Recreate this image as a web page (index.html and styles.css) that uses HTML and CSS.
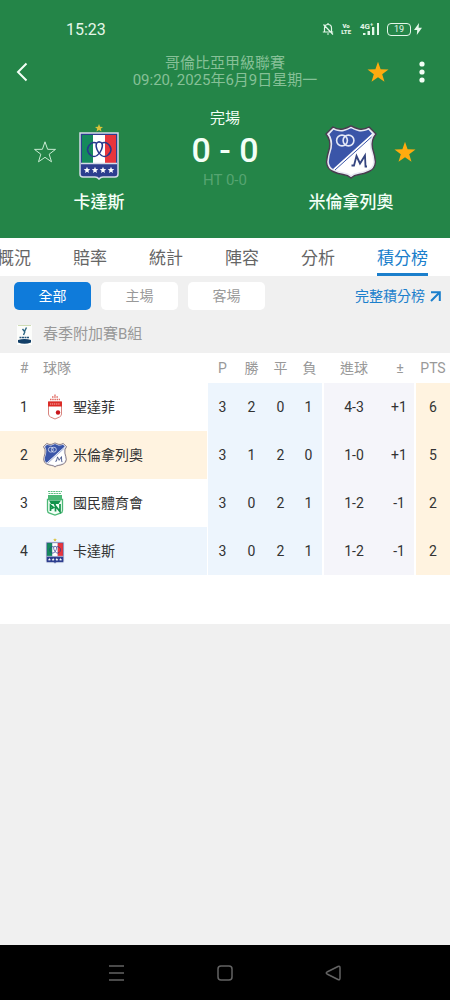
FILE: index.html
```
<!DOCTYPE html>
<html lang="zh-Hant">
<head>
    <meta charset="UTF-8">
    <meta name="viewport" content="width=device-width, initial-scale=1.0">
    <title>卡達斯 0 - 0 米倫拿列奧</title>
    <link rel="stylesheet" href="styles.css">
</head>
<body>
    <!-- shared crests and icons -->
    <svg class="defs" width="0" height="0" aria-hidden="true">
        <symbol id="star" viewBox="0 0 24 24">
            <path d="M12 1.8l2.6 7.5 7.9.1-6.3 4.8 2.3 7.6-6.5-4.5-6.5 4.5 2.3-7.6L1.5 9.4l7.9-.1z"/>
        </symbol>
        <symbol id="cadiz" viewBox="0 0 40 56">
            <path d="M20 0l1.1 2.7 2.9.2-2.2 1.9.7 2.8L20 6.1l-2.5 1.5.7-2.8L16 2.9l2.900-.2z" fill="#d9c23a"/>
            <path d="M1 9h38v41q0 3-3 3H24q-2.5 0-4 2-1.5-2-4-2H4q-3 0-3-3z" fill="#2d3e8f" stroke="#d5dbe8" stroke-width="1.5"/>
            <path d="M3 11h11v28H3z" fill="#158a5c"/>
            <path d="M14 11h12v28H14z" fill="#fff"/>
            <path d="M26 11h11v28H26z" fill="#e8353c"/>
            <path d="M2 39.5h36" stroke="#d5dbe8" stroke-width="1.5"/>
            <g fill="none" stroke="#26398c" stroke-width="1.5">
                <path d="M18 19.5q-3-2-6 0-3.500 2.500-3.500 6t3.500 6q3 2 6 0 3-2 4.500-6t.5-6q-1-2-3.500-1.500"/>
                <path d="M22.500 19.5q3-2 6 0 3.500 2.500 3.500 6t-3.500 6q-3 2-6 0-3-2-4.500-6t-.5-6q1-2 3-1.500"/>
            </g>
            <g fill="#fff">
                <path id="s" d="M8 42.800l.9 2.300 2.400.1-1.900 1.500.6 2.300L8 47.700l-2 1.300.6-2.300-1.900-1.500 2.400-.1z"/>
                <use href="#s" x="8"/>
                <use href="#s" x="16"/>
                <use href="#s" x="24"/>
            </g>
        </symbol>
        <symbol id="millonarios" viewBox="0 0 52 54">
            <path d="M8 2Q13 5 18 4 22 3 26 .8 30 3 34 4 39 5 44 2L51 9Q46 15 47.5 23 50 31 50.5 37 50 44 44 46.5 39 49 34 49.5 29 50 26 53 23 50 18 49.5 13 49 8 46.5 2 44 1.5 37 2 31 4.5 23 6 15 1 9z" fill="#e6e8f2" stroke="#4a3c50" stroke-width="1.4"/>
            <path d="M8.5 4.8Q14 7 18.5 6.2 22 5.4 26 3.2 30 5.4 33.5 6.2 38 7 43.5 4.8L47.6 9.2Q43.8 15 45.2 23 48 31 48.2 37 47.6 42.5 43 44.5 38 46.8 33.5 47.2 29 47.6 26 50 23 47.6 18.5 47.2 14 46.8 9 44.5 4.4 42.5 3.8 37 4 31 6.8 23 8.2 15 4.4 9.2z" fill="#fff"/>
            <path d="M8.5 4.8Q14 7 18.5 6.2 22 5.4 26 3.2 30 5.4 33.5 6.2 38 7 43.5 4.8L47 8.7 8 44Q4.4 42 3.8 37 4 31 6.800 23 8.2 15 4.4 9.2z" fill="#3a55a8"/>
            <path d="M46.500 12L10 45" stroke="#3a55a8" stroke-width="1"/>
            <g fill="none" stroke="#e3e8f6" stroke-width="1.6">
                <circle cx="17" cy="15.500" r="5.400"/>
                <circle cx="23.500" cy="15.500" r="5.400"/>
            </g>
            <path d="M26.500 40.500h2.500l2.500-9.500 3.500 7.500 5-8 .5 11h1.500" fill="none" stroke="#35457f" stroke-width="1.8"/>
        </symbol>
        <symbol id="santafe" viewBox="0 0 16 26">
            <path d="M3 5.5h10M5 3h6M8 .5v2" stroke="#e06a62" stroke-width="1.3" stroke-dasharray="1.5 .7"/>
            <path d="M1.5 8v12q0 2 2 3L8 25l4.5-2q2-1 2-3V8z" fill="#fff" stroke="#d8847e"/>
            <path d="M1 7.5h14v5H1z" fill="#dc2b27"/>
            <path d="M3 10h10" stroke="#f4b9b4" stroke-dasharray="1.2 .7"/>
            <circle cx="11" cy="18.5" r="2.2" fill="#c9151b"/>
        </symbol>
        <symbol id="nacional" viewBox="0 0 18 26">
            <path d="M2 1.5h14M2.5 3.5h13" stroke="#5fbf82" stroke-dasharray="2 .6"/>
            <path d="M2 5h14v4H2z" fill="#4cb876"/>
            <path d="M1.5 9.5h15v11q0 2-2 2.6L9 25l-5.5-1.9q-2-.6-2-2.6z" fill="#f2fff6" stroke="#4cb876" stroke-width="1.3"/>
            <path d="M3 10.5h12L12.5 14H10l-1 2.5L7.5 14H5z" fill="#12924a"/>
            <path d="M4.5 21v-6l3 2.5-3 1.5M9.5 21.5V16l4.5 5.5V14" fill="none" stroke="#12924a" stroke-width="1.7"/>
        </symbol>
    </svg>

    <header class="top">
        <div class="status-bar">
            <span class="clock">15:23</span>
            <div class="status-icons">
                <svg width="12" height="14" viewBox="0 0 12 14" fill="none" stroke="#e4f7e9" stroke-width="1.2">
                    <path d="M2.5 9.5V6a3.5 3.5 0 0 1 7 0v3.5M.8 10h10.4M5 12h2M6 2.5V1M1.5 2.5l9.5 10"/>
                </svg>
                <span class="volte">Vo<br>LTE</span>
                <svg class="signal" width="21" height="14" viewBox="0 0 21 14" fill="#e4f7e9">
                    <path d="M4 11h2.5v2H4zM8.5 9h2.5v4H8.5zM13 5h2.3v8H13zM18 1h2v12h-2z"/>
                    <text x="1" y="6.5">4G⁺</text>
                </svg>
                <span class="battery">19</span>
                <svg class="bolt" width="8" height="12" viewBox="0 0 8 12" fill="#e4f7e9">
                    <path d="M5 0L0 7h3.200L2.800 12 8 4.800H4.600z"/>
                </svg>
            </div>
        </div>

        <div class="app-bar">
            <div class="app-left">
                <button class="icon-btn" aria-label="返回">
                    <svg width="12" height="20" viewBox="0 0 12 20" fill="none" stroke="#f3fff6" stroke-width="2">
                        <path d="M10.5 1.5L2 10l8.5 8.5"/>
                    </svg>
                </button>
            </div>
            <p class="league">哥倫比亞甲級聯賽<br>09:20, 2025年6月9日星期一</p>
            <div class="app-right">
                <button class="icon-btn" aria-label="收藏賽事">
                    <svg class="star-on" width="24" height="24"><use href="#star"/></svg>
                </button>
                <button class="icon-btn" aria-label="更多">
                    <svg width="6" height="22" viewBox="0 0 6 22" fill="#f3fff6">
                        <circle cx="3" cy="3" r="2.6"/><circle cx="3" cy="11" r="2.6"/><circle cx="3" cy="19" r="2.6"/>
                    </svg>
                </button>
            </div>
        </div>

        <section class="match">
            <button class="fav" aria-label="收藏卡達斯">
                <svg class="star-off" width="24" height="24"><use href="#star"/></svg>
            </button>
            <div class="team">
                <svg width="40" height="56"><use href="#cadiz"/></svg>
                <span>卡達斯</span>
            </div>
            <div class="result">
                <span class="state">完場</span>
                <strong class="score">0 - 0</strong>
                <span class="half">HT 0-0</span>
            </div>
            <div class="team">
                <svg width="52" height="56"><use href="#millonarios"/></svg>
                <span>米倫拿列奧</span>
            </div>
            <button class="fav" aria-label="收藏米倫拿列奧">
                <svg class="star-on" width="24" height="24"><use href="#star"/></svg>
            </button>
        </section>
    </header>

    <nav class="tabs">
        <a href="#">概況</a>
        <a href="#">賠率</a>
        <a href="#">統計</a>
        <a href="#">陣容</a>
        <a href="#">分析</a>
        <a href="#" class="active">積分榜</a>
    </nav>

    <main>
        <div class="filters">
            <button class="active">全部</button>
            <button>主場</button>
            <button>客場</button>
            <a href="#">完整積分榜
                <svg width="11" height="11" viewBox="0 0 11 11" fill="none" stroke="currentColor" stroke-width="2">
                    <path d="M1 10l8.5-8.5M1 1.2h8.8V10"/>
                </svg>
            </a>
        </div>

        <h2 class="group">
            <svg width="15" height="20" viewBox="0 0 15 20">
                <path d="M0 0h15v20H0z" fill="#fcfdfb"/>
                <path d="M1 .5h13" stroke="#cfdcb5"/>
                <path d="M5.500 4l2 2.500 2-4M8 6.500L6.500 10" fill="none" stroke="#2b6480" stroke-width="1.4"/>
                <path d="M2.500 12.500h10" stroke="#27567a" stroke-width="1.6" stroke-dasharray="2 .5"/>
                <path d="M1 15q6.5-2 13 0v2.5q-6.5 2.5-13 0z" fill="#123f68"/>
            </svg>
            春季附加賽B組
        </h2>

        <table>
            <colgroup>
                <col class="c-rank"><col class="c-team">
                <col class="c-num"><col class="c-num"><col class="c-num"><col class="c-num">
                <col class="c-goals"><col class="c-diff"><col class="c-pts">
            </colgroup>
            <thead>
                <tr>
                    <th class="rank">#</th>
                    <th class="name">球隊</th>
                    <th>P</th>
                    <th>勝</th>
                    <th>平</th>
                    <th>負</th>
                    <th>進球</th>
                    <th>±</th>
                    <th>PTS</th>
                </tr>
            </thead>
            <tbody>
                <tr>
                    <td class="rank">1</td>
                    <td class="name"><div><svg width="24" height="26"><use href="#santafe"/></svg>聖達菲</div></td>
                    <td class="rec">3</td><td class="rec">2</td><td class="rec">0</td><td class="rec last">1</td>
                    <td class="goals">4-3</td><td class="goals last">+1</td>
                    <td class="pts">6</td>
                </tr>
                <tr class="away">
                    <td class="rank">2</td>
                    <td class="name"><div><svg width="24" height="26"><use href="#millonarios"/></svg>米倫拿列奧</div></td>
                    <td class="rec">3</td><td class="rec">1</td><td class="rec">2</td><td class="rec last">0</td>
                    <td class="goals">1-0</td><td class="goals last">+1</td>
                    <td class="pts">5</td>
                </tr>
                <tr>
                    <td class="rank">3</td>
                    <td class="name"><div><svg width="24" height="26"><use href="#nacional"/></svg>國民體育會</div></td>
                    <td class="rec">3</td><td class="rec">0</td><td class="rec">2</td><td class="rec last">1</td>
                    <td class="goals">1-2</td><td class="goals last">-1</td>
                    <td class="pts">2</td>
                </tr>
                <tr class="home">
                    <td class="rank">4</td>
                    <td class="name"><div><svg width="24" height="26"><use href="#cadiz"/></svg>卡達斯</div></td>
                    <td class="rec">3</td><td class="rec">0</td><td class="rec">2</td><td class="rec last">1</td>
                    <td class="goals">1-2</td><td class="goals last">-1</td>
                    <td class="pts">2</td>
                </tr>
            </tbody>
        </table>
    </main>

    <footer class="sys-nav">
        <button aria-label="最近">
            <svg width="18" height="18" viewBox="0 0 18 18"><path d="M1 2h15M1 9h15M1 16h15"/></svg>
        </button>
        <button aria-label="主頁">
            <svg width="18" height="18" viewBox="0 0 18 18"><rect x="2" y="2" width="14" height="14" rx="3"/></svg>
        </button>
        <button aria-label="返回">
            <svg width="18" height="18" viewBox="0 0 18 18"><path d="M14 2.5Q16 1.5 16 4v10q0 2.5-2 1.5L3 10q-1.5-1 0-2z"/></svg>
        </button>
    </footer>
</body>
</html>
```
FILE: styles.css
```
* {
    margin: 0;
    padding: 0;
    box-sizing: border-box;
}

body {
    display: flex;
    flex-direction: column;
    min-height: 100vh;
    overflow-x: hidden;
    font-family: Roboto, "Noto Sans CJK TC", sans-serif;
    font-size: 15px;
    line-height: 17px;
    color: #333;
    background: #f0f0f0;
}

button {
    border: 0;
    background: none;
    font: inherit;
    color: inherit;
}

a {
    color: inherit;
    text-decoration: none;
}

svg {
    display: block;
    flex: none;
}

.defs {
    position: absolute;
}

/* header */
.top {
    height: 238px;
    background: #248548;
    color: #f3fff6;
}

.status-bar {
    display: flex;
    justify-content: space-between;
    align-items: center;
    height: 50px;
    padding: 8px 28px 0 66px;
}

.clock {
    font-size: 16px;
    color: #e4f7e9;
}

.status-icons {
    display: flex;
    align-items: center;
    color: #e4f7e9;
}

.volte {
    margin: 0 8px 0 7px;
    font-size: 6px;
    line-height: 6px;
    font-weight: 900;
    text-align: center;
}

.signal text {
    font-size: 8px;
    font-weight: 700;
}

.battery {
    width: 24px;
    height: 13px;
    margin-left: 7px;
    border: 1px solid #e4f7e9;
    border-radius: 4px;
    font-size: 9px;
    line-height: 11px;
    text-align: center;
}

.bolt {
    margin-left: 3px;
}

.app-bar {
    display: flex;
    align-items: center;
    height: 44px;
}

.app-left,
.app-right {
    display: flex;
    width: 94px;
}

.app-right {
    justify-content: flex-end;
    padding-right: 6px;
}

.icon-btn {
    display: flex;
    align-items: center;
    justify-content: center;
    width: 44px;
    height: 44px;
}

.league {
    flex: 1;
    text-align: center;
    white-space: nowrap;
    color: #86c097;
}

.star-on {
    fill: #ffab0f;
}

.star-off {
    fill: none;
    stroke: #c9ecd3;
    stroke-width: 1px;
}

.match {
    display: grid;
    grid-template-columns: 50px 58px 1fr 58px 50px;
    padding: 14px 20px 0;
}

.fav {
    display: flex;
    justify-content: center;
    align-items: center;
    height: 88px;
}

.team {
    display: flex;
    flex-direction: column;
    align-items: center;
    gap: 14px;
    padding-top: 16px;
    font-size: 17px;
    font-weight: 500;
    white-space: nowrap;
}

.result {
    display: flex;
    flex-direction: column;
    align-items: center;
}

.state {
    line-height: 20px;
}

.score {
    font-size: 34px;
    line-height: 44px;
    font-weight: 500;
}

.half {
    line-height: 17px;
    color: #56a471;
}

/* tabs */
.tabs {
    display: flex;
    justify-content: flex-end;
    gap: 42px;
    height: 38px;
    padding-right: 22px;
    overflow: hidden;
    background: #fff;
    font-size: 17px;
    line-height: 40px;
    white-space: nowrap;
    color: #666;
}

.tabs .active {
    color: #1b7fcc;
    border-bottom: 3px solid #1b7fcc;
}

main {
    flex: 1;
}

/* filters */
.filters {
    display: flex;
    gap: 10px;
    align-items: center;
    height: 40px;
    padding: 0 9px 0 14px;
    font-size: 14px;
}

.filters button {
    width: 77px;
    height: 28px;
    border-radius: 5px;
    background: #fff;
    color: #999;
}

.filters .active {
    background: #0f7bda;
    color: #fff;
}

.filters a {
    display: flex;
    align-items: center;
    gap: 5px;
    margin-left: auto;
    color: #1b7fcc;
}

.group {
    display: flex;
    align-items: center;
    gap: 11px;
    height: 37px;
    padding-left: 17px;
    font-size: 15px;
    font-weight: 400;
    color: #999;
}

/* standings */
table {
    width: 100%;
    table-layout: fixed;
    border-collapse: separate;
    border-spacing: 0;
    background: #fff;
    border-bottom: 49px solid #fff;
    font-size: 14px;
}

.c-rank { width: 43px; }
.c-num { width: 29px; }
.c-goals { width: 60px; }
.c-diff { width: 32px; }
.c-pts { width: 34px; }

th {
    height: 30px;
    font-weight: 400;
    color: #999;
    text-align: center;
}

td {
    height: 48px;
    text-align: center;
    vertical-align: middle;
}

.rank {
    padding-left: 5px;
}

.name {
    text-align: left;
    border-right: 1px solid #fff;
}

.name div {
    display: flex;
    align-items: center;
    gap: 6px;
}

.rec {
    background: #edf5fd;
}

.goals {
    background: #f5f5fa;
}

.rec.last,
.goals.last {
    border-right: 2px solid #fff;
}

.pts {
    background: #fff3e0;
}

.away .rank,
.away .name {
    background: #fff3e0;
}

.home .rank,
.home .name {
    background: #edf5fd;
}

/* system navigation */
.sys-nav {
    display: flex;
    justify-content: center;
    align-items: center;
    gap: 20%;
    height: 55px;
    background: #000;
}

.sys-nav button {
    display: flex;
    justify-content: center;
    width: 18px;
}

.sys-nav svg {
    fill: none;
    stroke: #636363;
    stroke-width: 1.5px;
}
```
